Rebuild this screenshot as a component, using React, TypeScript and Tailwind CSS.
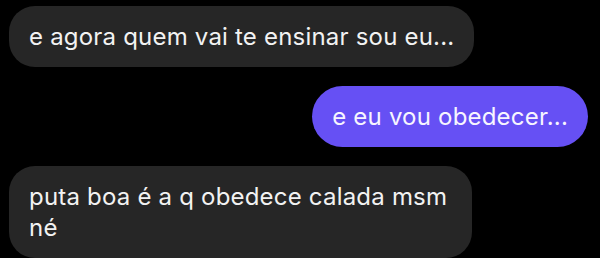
import React from 'react';

type Message = { text: string; mine: boolean; maxW: string };

const messages: Message[] = [
  { text: 'e agora quem vai te ensinar sou eu...', mine: false, maxW: 'max-w-[470px]' },
  { text: 'e eu vou obedecer...', mine: true, maxW: 'max-w-[470px]' },
  { text: 'puta boa é a q obedece calada msm né', mine: false, maxW: 'max-w-[463px]' },
];

const App: React.FC = () => {
  return (
    <div
      className="w-[600px] h-[258px] overflow-hidden bg-black pt-[6px] pl-[9px] pr-[12px] flex flex-col gap-[19px]"
      style={{ fontFamily: 'Inter, "Noto Sans", sans-serif' }}
    >
      {messages.map((m, i) => (
        <div key={i} className={m.mine ? 'flex justify-end' : 'flex justify-start'}>
          <div
            className={
              m.maxW +
              (m.mine
                ? ' rounded-[31px] bg-[#6650f4] px-[20px] py-[15px] text-[24px] leading-[31px] tracking-[0.2px] text-[#f7f5ff]'
                : ' rounded-[26px] bg-[#262626] px-[20px] py-[15px] text-[24px] leading-[31px] tracking-[0.2px] text-[#f2f2f2]')
            }
          >
            {m.text}
          </div>
        </div>
      ))}
    </div>
  );
};

export default App;
